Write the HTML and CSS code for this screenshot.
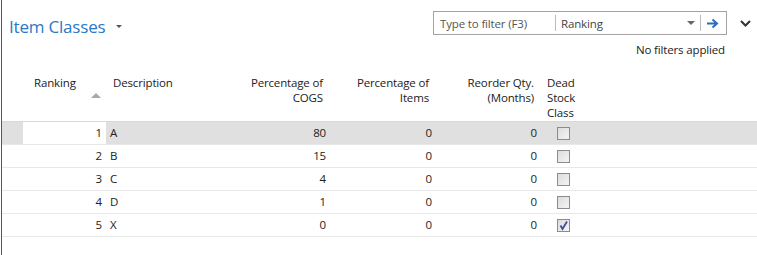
FILE: index.html
```html
<!DOCTYPE html>
<html>
<head>
<meta charset="utf-8">
<link rel="stylesheet" href="styles.css">
</head>
<body>
<div class="page">
  <div class="topbar">
    <div class="title-wrap">
      <span class="title">Item Classes</span>
      <span class="title-caret"></span>
    </div>
    <div class="right-tools">
      <div class="filter-line">
        <div class="filter-box">
          <span class="filter-input">Type to filter (F3)</span>
          <span class="filter-sep"></span>
          <span class="filter-field">Ranking</span>
          <span class="filter-caret"></span>
          <span class="filter-sep2"></span>
          <svg class="filter-go" width="13" height="11" viewBox="0 0 13 11"><path d="M1 5.5H10.5M6.5 1.5L11 5.5L6.5 9.5" fill="none" stroke="#2f6db5" stroke-width="2"/></svg>
        </div>
        <svg class="chev" width="11" height="7" viewBox="0 0 11 7"><path d="M1 1L5.5 5.5L10 1" fill="none" stroke="#333" stroke-width="2"/></svg>
      </div>
      <div class="nofilters">No filters applied</div>
    </div>
  </div>

  <div class="grid">
    <div class="row head">
      <div class="c sel"></div>
      <div class="c rank h">Ranking<span class="sort"></span></div>
      <div class="c desc h">Description</div>
      <div class="c num h"><div>Percentage of</div><div>COGS</div></div>
      <div class="c num h"><div>Percentage of</div><div>Items</div></div>
      <div class="c num h"><div>Reorder Qty.</div><div>(Months)</div></div>
      <div class="c dead h"><div>Dead</div><div>Stock</div><div>Class</div></div>
    </div>
    <div class="row data active">
      <div class="c sel"></div>
      <div class="c rank cur">1</div>
      <div class="c desc">A</div>
      <div class="c num">80</div>
      <div class="c num">0</div>
      <div class="c num">0</div>
      <div class="c dead"><span class="cb"></span></div>
    </div>
    <div class="row data">
      <div class="c sel"></div>
      <div class="c rank">2</div>
      <div class="c desc">B</div>
      <div class="c num">15</div>
      <div class="c num">0</div>
      <div class="c num">0</div>
      <div class="c dead"><span class="cb"></span></div>
    </div>
    <div class="row data">
      <div class="c sel"></div>
      <div class="c rank">3</div>
      <div class="c desc">C</div>
      <div class="c num">4</div>
      <div class="c num">0</div>
      <div class="c num">0</div>
      <div class="c dead"><span class="cb"></span></div>
    </div>
    <div class="row data">
      <div class="c sel"></div>
      <div class="c rank">4</div>
      <div class="c desc">D</div>
      <div class="c num">1</div>
      <div class="c num">0</div>
      <div class="c num">0</div>
      <div class="c dead"><span class="cb"></span></div>
    </div>
    <div class="row data">
      <div class="c sel"></div>
      <div class="c rank">5</div>
      <div class="c desc">X</div>
      <div class="c num">0</div>
      <div class="c num">0</div>
      <div class="c num">0</div>
      <div class="c dead"><span class="cb checked"><svg width="11" height="11" viewBox="0 0 11 11"><path d="M2.5 5.5L4.5 9L9 1.5" fill="none" stroke="#3a4f9e" stroke-width="1.8"/></svg></span></div>
    </div>
  </div>
</div>
</body>
</html>
```

FILE: styles.css
```css
html, body {
  margin: 0;
  padding: 0;
  background: #fff;
}
body {
  font-family: "Segoe UI", "Open Sans", "Noto Sans", sans-serif;
  font-size: 11.5px;
  letter-spacing: -0.15px;
  color: #222;
}
.page {
  margin-left: 1px;
  border-left: 1px solid #4e5868;
  height: 255px;
  box-sizing: border-box;
}
.topbar {
  display: flex;
  justify-content: space-between;
  height: 75px;
}
.title-wrap {
  display: flex;
  align-items: center;
  padding: 13px 0 0 7px;
  height: 26px;
}
.title {
  font-size: 17px;
  color: #2a78c8;
  letter-spacing: -0.2px;
}
.title-caret {
  margin-left: 11px;
  margin-top: 1px;
  width: 0;
  height: 0;
  border-left: 3px solid transparent;
  border-right: 3px solid transparent;
  border-top: 3px solid #555;
}
.right-tools {
  padding-top: 11px;
  display: flex;
  flex-direction: column;
  align-items: flex-end;
}
.filter-line {
  display: flex;
  align-items: center;
}
.filter-box {
  width: 292px;
  height: 22px;
  border: 1px solid #a3a3a3;
  display: flex;
  align-items: center;
  color: #555;
}
.filter-input {
  width: 115px;
  padding-left: 6px;
  color: #555;
}
.filter-sep {
  width: 1px;
  height: 16px;
  background: #bbb;
}
.filter-field {
  flex: 1;
  padding-left: 5px;
  color: #444;
}
.filter-caret {
  width: 0;
  height: 0;
  border-left: 4px solid transparent;
  border-right: 4px solid transparent;
  border-top: 4px solid #666;
  margin-right: 5px;
}
.filter-sep2 {
  width: 1px;
  height: 16px;
  background: #bbb;
  margin-right: 5px;
}
.filter-go {
  margin-right: 7px;
}
.chev {
  margin-left: 13px;
  margin-right: 6px;
}
.nofilters {
  margin-top: 7px;
  margin-right: 32px;
  color: #222;
}
.grid {
  display: flex;
  flex-direction: column;
}
.row {
  display: grid;
  grid-template-columns: 21px 83px 113px 111px 106px 105px 1fr;
}
.row.head {
  height: 46px;
  border-bottom: 1px solid #d8d8d8;
  line-height: 15px;
}
.row.head .c div {
  height: 15px;
}
.row.data {
  height: 22px;
  border-bottom: 1px solid #e8e8e8;
  line-height: 22px;
}
.row.active {
  background: #e0e0e0;
}
.c {
  white-space: nowrap;
}
.rank {
  text-align: right;
  padding-right: 4px;
  position: relative;
}
.rank.h {
  text-align: left;
  padding-left: 11px;
}
.cur {
  background: #fff;
}
.sort {
  position: absolute;
  left: 68px;
  top: 18px;
  width: 0;
  height: 0;
  border-left: 5px solid transparent;
  border-right: 5px solid transparent;
  border-bottom: 5px solid #a8a8a8;
}
.desc {
  padding-left: 4px;
}
.desc.h {
  padding-left: 7px;
}
.num {
  text-align: right;
  padding-right: 4px;
}
.num.h {
  padding-right: 7px;
}
.dead {
  padding-left: 16px;
  display: flex;
  align-items: center;
}
.dead.h {
  display: block;
  padding-left: 6px;
}
.cb {
  width: 11px;
  height: 11px;
  border: 1px solid #8c8c8c;
  background: linear-gradient(135deg, #dcdcdc, #f4f4f4);
  display: flex;
  align-items: center;
  justify-content: center;
}
.cb svg {
  display: block;
}
```
